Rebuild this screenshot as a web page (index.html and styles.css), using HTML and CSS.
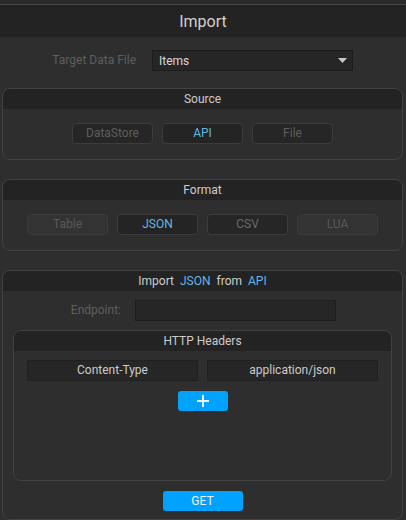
FILE: index.html
```html
<!DOCTYPE html>
<html>
<head>
<meta charset="utf-8">
<link rel="stylesheet" href="styles.css">
</head>
<body>
<div class="page">
  <div class="topstrip"></div>
  <div class="titlebar">Import</div>

  <div class="target-row">
    <div class="label">Target Data File</div>
    <div class="dropdown">
      <span>Items</span>
      <svg class="caret" width="9" height="5" viewBox="0 0 9 5"><path d="M0 0H9L4.5 5Z" fill="#c8c8c8"/></svg>
    </div>
  </div>

  <section class="box box-source">
    <div class="box-head">Source</div>
    <div class="btn-row">
      <div class="opt opt-dark">DataStore</div>
      <div class="opt opt-dark opt-active">API</div>
      <div class="opt opt-dark">File</div>
    </div>
  </section>

  <section class="box box-format">
    <div class="box-head">Format</div>
    <div class="btn-row">
      <div class="opt opt-off">Table</div>
      <div class="opt opt-dark opt-active">JSON</div>
      <div class="opt opt-dark opt-mid">CSV</div>
      <div class="opt opt-off">LUA</div>
    </div>
  </section>

  <section class="box box-import">
    <div class="box-head head-words"><span>Import</span><span class="hl">JSON</span><span>from</span><span class="hl">API</span></div>
    <div class="endpoint-row">
      <div class="label">Endpoint:</div>
      <div class="input"></div>
    </div>
    <section class="box box-headers">
      <div class="box-head">HTTP Headers</div>
      <div class="hdr-row">
        <div class="cell">Content-Type</div>
        <div class="cell">application/json</div>
      </div>
      <div class="plus-row">
        <div class="btn-blue btn-plus">
          <svg width="12" height="12" viewBox="0 0 12 12"><path d="M6 0V12M0 6H12" stroke="#f0f0f0" stroke-width="2"/></svg>
        </div>
      </div>
    </section>
    <div class="get-row">
      <div class="btn-blue btn-get">GET</div>
    </div>
  </section>
</div>
</body>
</html>
```
FILE: styles.css
```css
* { box-sizing: border-box; }
html, body { margin: 0; padding: 0; }
body {
  background: #2e2e2e;
  font-family: Roboto, "Open Sans", sans-serif;
  font-size: 12px;
  color: #cccccc;
  width: 406px;
  height: 520px;
  overflow: hidden;
}
.page { width: 406px; height: 520px; display: flex; flex-direction: column; }
.topstrip {
  height: 5px;
  background: #2a2a2a;
  border-bottom: 1px solid #474747;
}
.titlebar {
  height: 32px;
  padding-top: 2px;
  background: #232323;
  color: #d0d0d0;
  font-size: 16px;
  display: flex;
  align-items: center;
  justify-content: center;
}
.target-row {
  margin-top: 13px;
  display: grid;
  grid-template-columns: 136px 201px;
  column-gap: 16px;
  align-items: center;
  height: 21px;
}
.label {
  text-align: right;
  color: #5e5e5e;
}
.dropdown {
  height: 21px;
  padding: 1px 4px 0 6px;
  background: #262626;
  border: 1px solid #1c1c1c;
  display: flex;
  align-items: center;
  justify-content: space-between;
  color: #d8d8d8;
}
.caret { margin-right: 1px; }

.box {
  border: 1px solid #424242;
  border-radius: 8px;
  overflow: hidden;
  background: #2e2e2e;
  margin: 0 3px 0 2px;
}
.box-head {
  height: 20px;
  padding-top: 1px;
  background: #232323;
  display: flex;
  align-items: center;
  justify-content: center;
  color: #cccccc;
}
.head-words { gap: 6px; }
.hl { color: #62b6e7; }
.box-source { margin-top: 17px; height: 72px; }
.box-format { margin-top: 19px; height: 72px; }
.btn-row {
  display: flex;
  justify-content: center;
  gap: 9px;
  margin-top: 14px;
}
.opt {
  width: 81px;
  height: 21px;
  border-radius: 4px;
  display: flex;
  align-items: center;
  justify-content: center;
}
.opt-dark {
  background: #262626;
  border: 1px solid #3c3c3c;
  color: #5e5e5e;
}
.opt-mid { color: #6a6a6a; }
.opt-active { color: #62b6e7; background: #242424; }
.opt-off {
  background: #333333;
  border: 1px solid #3a3a3a;
  color: #595959;
}
.box-import {
  margin-top: 19px;
  height: 251px;
  display: flex;
  flex-direction: column;
}
.endpoint-row {
  margin-top: 9px;
  display: grid;
  grid-template-columns: 118px 201px;
  column-gap: 14px;
  align-items: center;
  height: 21px;
}
.input {
  height: 21px;
  background: #262626;
  border: 1px solid #1e1e1e;
}
.box-headers {
  margin: 9px 10px 0 10px;
  height: 151px;
}
.hdr-row {
  display: flex;
  justify-content: center;
  gap: 9px;
  margin-top: 9px;
}
.cell {
  width: 171px;
  height: 21px;
  background: #262626;
  border: 1px solid #202020;
  display: flex;
  align-items: center;
  justify-content: center;
  color: #cccccc;
}
.plus-row { display: flex; justify-content: center; margin-top: 10px; }
.btn-blue {
  background: #00a2ff;
  border-radius: 3px;
  display: flex;
  align-items: center;
  justify-content: center;
  color: #f2f2f2;
}
.btn-plus { width: 50px; height: 20px; }
.get-row { display: flex; justify-content: center; margin-top: 10px; }
.btn-get { width: 80px; height: 20px; }
```
